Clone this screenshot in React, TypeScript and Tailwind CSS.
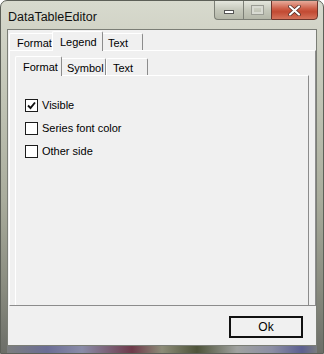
import { useState } from 'react';

type TabDef = {
  label: string;
  width: string;
  activeWidth: string;
  pad: string;
};

function Tab({ tab, active, onClick }: { tab: TabDef; active?: boolean; onClick?: () => void }) {
  return (
    <button
      onClick={onClick}
      className={
        (active
          ? 'relative z-10 -mb-px -mx-[2px] h-[20px] pt-[2px] ' + tab.activeWidth
          : 'h-[17px] pt-[1px] ' + tab.width) +
        ' ' +
        tab.pad +
        ' flex shrink-0 items-start whitespace-nowrap rounded-t-[2px] border-t border-l border-r border-l-white border-t-white border-r-[#8c8c8c] bg-[#f0f0f0]'
      }
    >
      {tab.label}
    </button>
  );
}

function Checkbox({ label, checked, onToggle }: { label: string; checked: boolean; onToggle: () => void }) {
  return (
    <label className="flex h-[23px] cursor-default items-center gap-[2px]" onClick={onToggle}>
      <span className="flex h-[13px] w-[13px] items-center justify-center border border-[#1c1c1c] bg-white">
        {checked && (
          <svg width="9" height="9" viewBox="0 0 9 9">
            <path d="M1 4.5 L3.5 7 L8 1.5" fill="none" stroke="#111" strokeWidth="1.9" />
          </svg>
        )}
      </span>
      <span className="ml-[2px]">{label}</span>
    </label>
  );
}

const outerTabs: TabDef[] = [
  { label: 'Format', width: 'w-[45px]', activeWidth: 'w-[49px]', pad: 'pl-[7px]' },
  { label: 'Legend', width: 'w-[48px]', activeWidth: 'w-[51px]', pad: 'pl-[7px]' },
  { label: 'Text', width: 'w-[42px]', activeWidth: 'w-[44px]', pad: 'pl-[6px]' },
];

const innerTabs: TabDef[] = [
  { label: 'Format', width: 'w-[45px]', activeWidth: 'w-[47px]', pad: 'pl-[7px]' },
  { label: 'Symbol', width: 'w-[46px]', activeWidth: 'w-[48px]', pad: 'pl-[6px]' },
  { label: 'Text', width: 'w-[42px]', activeWidth: 'w-[46px]', pad: 'pl-[6px]' },
];

export default function App() {
  const [outerTab, setOuterTab] = useState('Legend');
  const [innerTab, setInnerTab] = useState('Format');
  const [visible, setVisible] = useState(true);
  const [seriesColor, setSeriesColor] = useState(false);
  const [otherSide, setOtherSide] = useState(false);

  return (
    <div className="flex h-[354px] w-[324px] flex-col overflow-hidden rounded-t-[7px] border border-[#5d6058] bg-[linear-gradient(#d8dace,#c3c6b7_90px,#a9ac9c_200px,#888a7e_290px,#6c6e68)] font-['Liberation_Sans',Arial,sans-serif] text-[11px] text-black">
      <div className="flex h-[28px] shrink-0 items-start">
        <span className="pl-[7px] pt-[7px] text-[12.5px] text-[#111]">DataTableEditor</span>
        <div className="ml-auto mr-[5px] -mt-px flex h-[20px] shrink-0">
          <div className="flex w-[29px] shrink-0 items-end justify-center rounded-bl-[4px] border border-r-0 border-[#7c7f76] bg-[linear-gradient(#e4e6dd,#c5c8bb_50%,#b4b7a9)] pb-[5px]">
            <span className="h-[4px] w-[10px] border border-[#555] bg-white" />
          </div>
          <div className="flex w-[28px] shrink-0 items-center justify-center border border-r-0 border-[#7c7f76] bg-[linear-gradient(#e4e6dd,#c5c8bb_50%,#b4b7a9)]">
            <span className="h-[8px] w-[11px] border-2 border-[#d8dad2] outline outline-1 outline-[#9a9c94]" />
          </div>
          <div className="flex w-[47px] shrink-0 items-center justify-center rounded-br-[4px] border border-[#6d362d] bg-[linear-gradient(#e7ab9b,#cc5a43_45%,#c24a33_60%,#d5745c)]">
            <svg width="13" height="11" viewBox="0 0 13 11">
              <path d="M2 1.5 L11 9.5 M11 1.5 L2 9.5" stroke="#4a2a24" strokeWidth="3.6" strokeLinecap="round" />
              <path d="M2 1.5 L11 9.5 M11 1.5 L2 9.5" stroke="#fff" strokeWidth="2.2" strokeLinecap="round" />
            </svg>
          </div>
        </div>
      </div>

      <div className="mx-[6px] flex h-[317px] shrink-0 flex-col border border-[#7b7e76] bg-[#f0f0f0]">
        <div className="flex h-[20px] items-end pl-[1px]">
          {outerTabs.map((t) => (
            <Tab key={t.label} tab={t} active={outerTab === t.label} onClick={() => setOuterTab(t.label)} />
          ))}
        </div>

        <div className="ml-[1px] flex h-[256px] w-[307px] flex-col border border-t-white border-l-white border-r-[#8c8c8c] border-b-[#8c8c8c] pl-[5px] pr-[6px]">
          <div className="flex h-[24px] items-end pl-[2px]">
            {innerTabs.map((t) => (
              <Tab key={t.label} tab={t} active={innerTab === t.label} onClick={() => setInnerTab(t.label)} />
            ))}
          </div>
          <div className="flex flex-1 flex-col border-t border-l border-r border-t-white border-l-white border-r-[#8c8c8c] pl-[9px] pt-[18px]">
            <Checkbox label="Visible" checked={visible} onToggle={() => setVisible(!visible)} />
            <Checkbox label="Series font color" checked={seriesColor} onToggle={() => setSeriesColor(!seriesColor)} />
            <Checkbox label="Other side" checked={otherSide} onToggle={() => setOtherSide(!otherSide)} />
          </div>
        </div>

        <div className="flex justify-end pr-[13px] pt-[10px]">
          <button className="flex h-[22px] w-[74px] items-center justify-center border-2 border-[#111] bg-[#f0f0f0] text-[12px]">
            Ok
          </button>
        </div>
      </div>

      <div className="mx-[6px] flex-1 bg-[linear-gradient(to_right,#7c7e7f,#6b6d95_40px,#8a8ca8_75px,#6e3a4a_125px,#8d8c78_155px,#4e5339_190px,#a0a2a0_230px,#8c8ea4_265px,#5c5f90_295px,#7a7c80)]" />
    </div>
  );
}
